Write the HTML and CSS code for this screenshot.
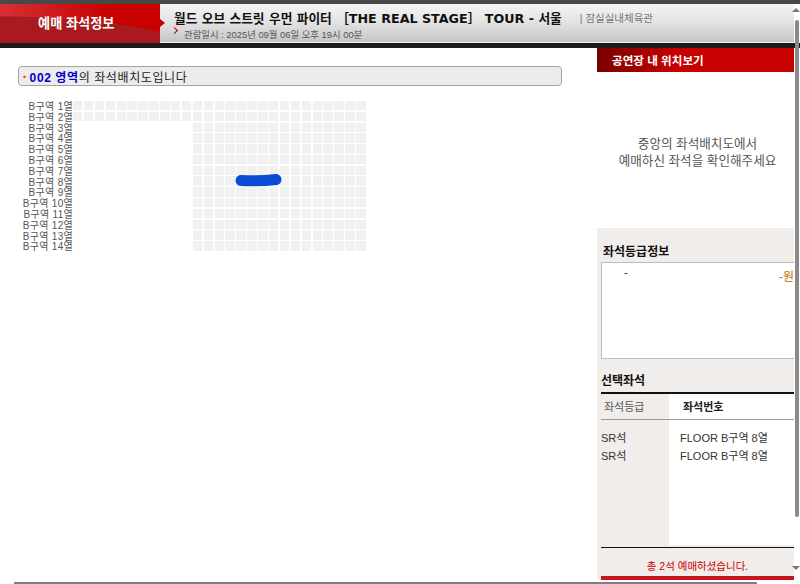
FILE: index.html
```html
<!DOCTYPE html>
<html lang="ko">
<head>
    <meta charset="UTF-8">
    <title>예매 좌석정보</title>
    <link rel="stylesheet" href="styles.css">
</head>
<body>
    <div class="top-strip"></div>

    <div class="header">
        <div class="header-red">예매 좌석정보</div>
        <div class="header-info">
            <div class="show-line">
                <span class="show-title">월드 오브 스트릿 우먼 파이터 ［THE REAL STAGE］ TOUR - 서울</span>
                <span class="show-place">| 잠실실내체육관</span>
            </div>
            <div class="show-date">관람일시 : 2025년 09월 06일 오후 19시 00분</div>
        </div>
    </div>
    <div class="black-strip"></div>

    <div class="main">
        <div class="left">
            <div class="zone-title">
                <span class="zone-star">✦</span>
                <span><span class="zone-name">002 영역</span>의 좌석배치도입니다</span>
            </div>

            <div class="seat-map">
                <div class="row-labels" id="rowLabels"></div>
                <div class="seats" id="seats"></div>
                <svg class="picked" width="50" height="16" viewBox="0 0 50 16">
                    <path d="M7 8.5 C18 9 34 8.5 42 7.5" fill="none" stroke="#0a4bd6" stroke-width="11" stroke-linecap="round"/>
                </svg>
            </div>
        </div>

        <div class="right">
            <div class="place-head">공연장 내 위치보기</div>
            <div class="place-msg">
                <p>중앙의 좌석배치도에서</p>
                <p>예매하신 좌석을 확인해주세요</p>
            </div>

            <div class="panel">
                <h3 class="grade-head">좌석등급정보</h3>
                <div class="grade-box">
                    <span class="grade-name">-</span>
                    <span class="grade-price">-원</span>
                </div>

                <h3 class="pick-head">선택좌석</h3>
                <div class="pick-table">
                    <div class="pick-cols">
                        <div class="col-grade">좌석등급</div>
                        <div class="col-seat">좌석번호</div>
                    </div>
                    <div class="pick-rows">
                        <div class="rows-grade">
                            <p>SR석</p>
                            <p>SR석</p>
                        </div>
                        <div class="rows-seat">
                            <p>FLOOR B구역 8열</p>
                            <p>FLOOR B구역 8열</p>
                        </div>
                    </div>
                </div>
                <div class="total">총 2석 예매하셨습니다.</div>
                <div class="red-bar"></div>
            </div>
        </div>
    </div>

    <div class="scroll-y"></div>
    <div class="arrow-up"></div>
    <div class="arrow-down"></div>
    <div class="scroll-x"></div>

    <script>
        // Build row labels and seat cells
        const rowLabels = document.getElementById('rowLabels');
        const seats = document.getElementById('seats');

        for (let row = 1; row <= 14; row++) {
            const label = document.createElement('div');
            label.className = 'row-label';
            label.textContent = `B구역 ${row}열`;
            rowLabels.appendChild(label);

            for (let col = 1; col <= 27; col++) {
                const seat = document.createElement('div');
                // Rows 3 and down have no seats in the first 11 columns
                seat.className = (row > 2 && col <= 11) ? 'seat empty' : 'seat';
                seats.appendChild(seat);
            }
        }
    </script>
</body>
</html>
```

FILE: styles.css
```css
* {
    margin: 0;
    padding: 0;
    box-sizing: border-box;
}

html, body {
    width: 800px;
    height: 584px;
    overflow: hidden;
}

body {
    position: relative;
    background: #fff;
    font-family: "Liberation Sans", "Noto Sans CJK KR", sans-serif;
    font-size: 11px;
    color: #333;
}

.top-strip {
    height: 4px;
    background: #484848;
}

.header {
    display: flex;
    height: 39px;
    margin-right: 6px;
}

.header-red {
    position: relative;
    width: 160px;
    padding-left: 38px;
    line-height: 40px;
    color: #fff;
    font-size: 13.2px;
    font-weight: 700;
    background: radial-gradient(ellipse 210px 44px at 0 56px, #a81a1e 98%, transparent 100%),
                linear-gradient(90deg, #d63034 0%, #c80000 70%);
}

.header-red::after {
    content: "";
    position: absolute;
    left: 160px;
    top: 15px;
    border-left: 5px solid #c80000;
    border-top: 4px solid transparent;
    border-bottom: 4px solid transparent;
}

.header-info {
    flex: 1;
    padding: 5px 0 0 14px;
    background: linear-gradient(180deg, #f4f4f4 0%, #e4e4e4 45%, #c6c6c6 100%);
    border-bottom: 1px solid #f0f0f0;
}

.show-line {
    display: flex;
    align-items: center;
    height: 17px;
}

.show-title {
    font-family: "DejaVu Sans", "Noto Sans CJK KR", sans-serif;
    font-size: 12.7px;
    font-weight: 700;
    color: #111;
    white-space: nowrap;
}

.show-place {
    margin-left: 18px;
    font-size: 10.5px;
    color: #777;
}

.show-date {
    position: relative;
    margin-top: 2px;
    padding-left: 10px;
    font-size: 9.4px;
    line-height: 14px;
    color: #555;
}

.show-date::before {
    content: "";
    position: absolute;
    left: -2px;
    top: 0;
    width: 4px;
    height: 4px;
    border-top: 1.5px solid #a00;
    border-right: 1.5px solid #a00;
    transform: rotate(45deg);
}

.black-strip {
    height: 5px;
    background: #1c1c1c;
}

.main {
    display: flex;
}

.left {
    width: 597px;
    padding: 18px 0 0 18px;
}

.zone-title {
    display: flex;
    align-items: center;
    width: 544px;
    height: 20px;
    padding-left: 3px;
    background: #ececec;
    border: 1px solid #a4a4a4;
    border-radius: 4px;
    font-size: 12px;
    letter-spacing: 0.6px;
    color: #222;
}

.zone-star {
    margin-right: 2px;
    font-size: 6px;
    color: #e03000;
}

.zone-name {
    font-weight: 700;
    color: #0000cc;
}

.seat-map {
    position: relative;
    display: flex;
    margin-top: 15px;
}

.row-labels {
    width: 54px;
    margin-left: 1px;
    padding-top: 1px;
    flex-shrink: 0;
}

.row-label {
    height: 10.8px;
    line-height: 10.8px;
    text-align: right;
    font-size: 10px;
    letter-spacing: 0.3px;
    color: #555;
    white-space: nowrap;
}

.seats {
    display: grid;
    grid-template-columns: repeat(27, 9.4px);
    grid-auto-rows: 9.4px;
    column-gap: 1.5px;
    row-gap: 1.4px;
}

.seat {
    background: #f1f1f1;
}

.seat.empty {
    background: none;
}

.picked {
    position: absolute;
    left: 216px;
    top: 71px;
}

.right {
    width: 197px;
}

.place-head {
    height: 24px;
    padding-left: 15px;
    line-height: 25px;
    color: #fff;
    font-size: 11.6px;
    font-weight: 700;
    background: linear-gradient(90deg, #7a0000 0%, #c80000 40%, #c80000 100%);
}

.place-msg {
    height: 156px;
    padding: 64px 0 0 4px;
    text-align: center;
    font-size: 12.6px;
    line-height: 17px;
    color: #555;
}

.panel {
    height: 352px;
    padding: 17px 0 0 4px;
    background: #f0edea;
}

.grade-head,
.pick-head {
    font-size: 12px;
    font-weight: 700;
    line-height: 14px;
    color: #111;
}

.grade-head {
    margin-left: 2px;
}

.grade-box {
    display: flex;
    justify-content: space-between;
    height: 97px;
    margin-top: 3px;
    padding: 2px 0 0 22px;
    background: #fff;
    border: 1px solid #bbb;
    border-right: none;
    line-height: 14px;
    color: #222;
}

.grade-price {
    margin-top: 5px;
    font-size: 12px;
    color: #c07000;
}

.pick-head {
    margin-top: 15px;
}

.pick-table {
    margin-top: 4px;
    border-top: 2px solid #111;
    border-bottom: 1px solid #111;
}

.pick-cols {
    display: flex;
    height: 26px;
    line-height: 26px;
    background: #fff;
    border-bottom: 1px solid #999;
}

.col-grade {
    width: 68px;
    padding-left: 3px;
    color: #555;
    background: #f0edea;
}

.col-seat {
    padding-left: 14px;
    font-weight: 700;
    color: #222;
}

.pick-rows {
    display: flex;
    height: 127px;
    margin-left: -4px;
}

.rows-grade {
    width: 72px;
    padding: 9px 0 0 4px;
    background: #f0edea;
}

.rows-seat {
    flex: 1;
    margin-bottom: 2px;
    padding: 9px 0 0 11px;
    background: #fff;
}

.rows-grade p,
.rows-seat p {
    height: 18px;
    line-height: 18px;
    color: #333;
}

.total {
    height: 28px;
    padding-top: 11px;
    text-align: center;
    font-size: 10.5px;
    line-height: 14px;
    color: #c00;
}

.red-bar {
    height: 4px;
    background: #c4161c;
}

.scroll-y {
    position: absolute;
    right: 1px;
    top: 20px;
    width: 4px;
    height: 497px;
    background: #8a8a8a;
    border-radius: 2px;
}

.arrow-up,
.arrow-down {
    position: absolute;
    right: 0;
    border-left: 4px solid transparent;
    border-right: 4px solid transparent;
}

.arrow-up {
    top: 8px;
    border-bottom: 4px solid #777;
}

.arrow-down {
    top: 566px;
    border-top: 4px solid #777;
}

.scroll-x {
    position: absolute;
    left: 14px;
    top: 582px;
    width: 743px;
    height: 2px;
    background: #808080;
}
```
